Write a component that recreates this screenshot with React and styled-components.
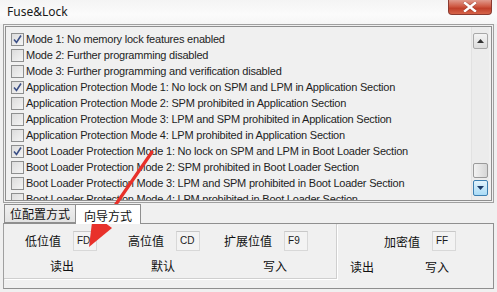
import React from "react";
import styled, { createGlobalStyle } from "styled-components";

const GlobalStyle = createGlobalStyle`
  html, body {
    margin: 0;
    padding: 0;
    background: #f0f0f0;
  }
`;

const fuseRows = [
  { text: "Mode 1: No memory lock features enabled", checked: true },
  { text: "Mode 2: Further programming disabled", checked: false },
  { text: "Mode 3: Further programming and verification disabled", checked: false },
  { text: "Application Protection Mode 1: No lock on SPM and LPM in Application Section", checked: true },
  { text: "Application Protection Mode 2: SPM prohibited in Application Section", checked: false },
  { text: "Application Protection Mode 3: LPM and SPM prohibited in Application Section", checked: false },
  { text: "Application Protection Mode 4: LPM prohibited in Application Section", checked: false },
  { text: "Boot Loader Protection Mode 1: No lock on SPM and LPM in Boot Loader Section", checked: true },
  { text: "Boot Loader Protection Mode 2: SPM prohibited in Boot Loader Section", checked: false },
  { text: "Boot Loader Protection Mode 3: LPM and SPM prohibited in Boot Loader Section", checked: false },
  { text: "Boot Loader Protection Mode 4: LPM prohibited in Boot Loader Section", checked: false },
];

const App = () => {
  return (
    <Window>
      <GlobalStyle />
      <TitleBar>
        <Title>Fuse&amp;Lock</Title>
        <CloseButton>
          <svg width="14" height="10" viewBox="0 0 14 10">
            <path d="M2 1 L12 9 M12 1 L2 9" stroke="#6d2a22" strokeWidth="3.6" strokeLinecap="square" opacity="0.35" />
            <path d="M2 1 L12 9 M12 1 L2 9" stroke="#fff" strokeWidth="2.4" strokeLinecap="square" />
          </svg>
        </CloseButton>
      </TitleBar>

      <ListFrame>
        <ListInner>
          <ListRows>
            {fuseRows.map((row) => (
              <Row key={row.text}>
                <CheckBox checked={row.checked}>
                  {row.checked && (
                    <svg width="9" height="9" viewBox="0 0 9 9">
                      <path d="M1 4.5 L3.5 7.5 L8 0.5" fill="none" stroke="#3b4f86" strokeWidth="1.6" />
                    </svg>
                  )}
                </CheckBox>
                <RowText>{row.text}</RowText>
              </Row>
            ))}
          </ListRows>
          <ScrollBar>
            <ScrollButton>
              <svg width="7" height="4" viewBox="0 0 7 4">
                <path d="M0 4 L3.5 0 L7 4 Z" fill="#333" />
              </svg>
            </ScrollButton>
            <ScrollTrack>
              <Thumb />
            </ScrollTrack>
            <ScrollButton hover>
              <svg width="7" height="4" viewBox="0 0 7 4">
                <path d="M0 0 L7 0 L3.5 4 Z" fill="#1d3d6a" />
              </svg>
            </ScrollButton>
          </ScrollBar>
        </ListInner>
      </ListFrame>

      <TabStrip>
        <Tab>位配置方式</Tab>
        <Tab active>向导方式</Tab>
      </TabStrip>

      <Panel>
        <Section main>
          <FieldRow pad={21}>
            <Field>
              <Label>低位值</Label>
              <ValueBox>FD</ValueBox>
            </Field>
            <Field offset={31}>
              <Label>高位值</Label>
              <ValueBox>CD</ValueBox>
            </Field>
            <Field offset={24}>
              <Label>扩展位值</Label>
              <ValueBox>F9</ValueBox>
            </Field>
          </FieldRow>
          <ButtonRow pad={46}>
            <ActionButton>读出</ActionButton>
            <ActionButton offset={77}>默认</ActionButton>
            <ActionButton offset={88}>写入</ActionButton>
          </ButtonRow>
        </Section>
        <Section>
          <FieldRow pad={47}>
            <Field>
              <Label>加密值</Label>
              <ValueBox>FF</ValueBox>
            </Field>
          </FieldRow>
          <ButtonRow pad={13}>
            <ActionButton>读出</ActionButton>
            <ActionButton offset={51}>写入</ActionButton>
          </ButtonRow>
        </Section>
      </Panel>

      <Annotation width="497" height="292" viewBox="0 0 497 292">
        <line x1="152" y1="152" x2="103" y2="223" stroke="#e8312a" strokeWidth="3.2" strokeLinecap="round" />
        <polygon points="89,247 93,214 112,228" fill="#e8312a" />
      </Annotation>
    </Window>
  );
};
export default App;

const Window = styled.div`
  position: relative;
  width: 497px;
  height: 292px;
  overflow: hidden;
  background: #f0f0f0;
  font-family: "Liberation Sans", Arial, sans-serif;
`;

const TitleBar = styled.div`
  height: 24px;
  display: flex;
  justify-content: space-between;
  align-items: flex-start;
  background: linear-gradient(to bottom, #f4f4f4, #fbfbfb 60%, #f6f6f6);
`;

const Title = styled.div`
  padding: 4px 0 0 7px;
  font-family: "Noto Sans", "Liberation Sans", sans-serif;
  font-size: 12px;
  line-height: 16px;
  color: #1a1a1a;
`;

const CloseButton = styled.div`
  width: 44px;
  height: 15px;
  margin-right: 5px;
  display: flex;
  align-items: center;
  justify-content: center;
  border: 1px solid #8a3a30;
  border-top: none;
  border-radius: 0 0 4px 4px;
  background: linear-gradient(to bottom, #e09a8c 0%, #cf5a44 45%, #c0402a 60%, #d6644a 100%);
  box-sizing: border-box;
`;

const ListFrame = styled.div`
  margin: 0 3px;
  height: 179px;
  border: 1px solid #a0a0a0;
  padding: 1px;
  box-sizing: border-box;
`;

const ListInner = styled.div`
  height: 100%;
  border: 1px solid #8f8f8f;
  box-sizing: border-box;
  display: flex;
  background: #f0f0f0;
  overflow: hidden;
`;

const ListRows = styled.div`
  flex: 1;
  padding: 4px 0 0 5px;
  overflow: hidden;
`;

const Row = styled.div`
  height: 16px;
  display: flex;
  align-items: center;
  white-space: nowrap;
`;

const CheckBox = styled.div`
  width: 11px;
  height: 11px;
  flex: none;
  border: 1px solid #8e8f8f;
  background: linear-gradient(135deg, #dcdcdc, #f4f4f4);
  display: flex;
  align-items: center;
  justify-content: center;
  margin-right: 2px;
`;

const RowText = styled.span`
  font-size: 11px;
  color: #1e1e1e;
  letter-spacing: -0.22px;
`;

const ScrollBar = styled.div`
  width: 17px;
  flex: none;
  display: flex;
  flex-direction: column;
  border-left: 1px solid #e2e2e2;
  background: #ececec;
  padding: 6px 0 4px 0;
  margin-right: 2px;
`;

const ScrollButton = styled.div`
  height: 14px;
  margin: 0 1px;
  display: flex;
  align-items: center;
  justify-content: center;
  border: 1px solid ${(p) => (p.hover ? "#3c7fb1" : "#a8a8a8")};
  border-radius: 2px;
  background: ${(p) =>
    p.hover
      ? "linear-gradient(to bottom, #e3f4fc, #a9dbf6)"
      : "linear-gradient(to bottom, #f4f4f4, #dcdcdc)"};
`;

const ScrollTrack = styled.div`
  flex: 1;
  display: flex;
  flex-direction: column;
  justify-content: flex-end;
  padding-bottom: 2px;
`;

const Thumb = styled.div`
  height: 13px;
  margin: 0 1px;
  border: 1px solid #9a9a9a;
  border-radius: 2px;
  background: linear-gradient(to right, #f2f2f2, #d6d6d6);
`;

const TabStrip = styled.div`
  display: flex;
  align-items: flex-end;
  height: 20px;
  padding-left: 4px;
`;

const Tab = styled.div`
  height: ${(p) => (p.active ? "20px" : "19px")};
  padding: 0 ${(p) => (p.active ? "8px" : "5px")};
  box-sizing: border-box;
  border: 1px solid #8f8f8f;
  border-bottom: ${(p) => (p.active ? "none" : "1px solid #8f8f8f")};
  border-left: ${(p) => (p.active ? "none" : "1px solid #8f8f8f")};
  background: ${(p) => (p.active ? "#ffffff" : "linear-gradient(to bottom, #f0f0f0, #e2e2e2)")};
  font-family: "Noto Sans CJK SC", sans-serif;
  font-size: 12px;
  line-height: ${(p) => (p.active ? "22px" : "18px")};
  color: #111;
  margin-bottom: ${(p) => (p.active ? "-1px" : "0")};
  position: relative;
  z-index: ${(p) => (p.active ? 1 : 0)};
`;

const Panel = styled.div`
  margin: 0 3px;
  height: 66px;
  border: 1px solid #8f8f8f;
  border-left: 1px solid #a0a0a0;
  background: #f0f0f0;
  display: flex;
  box-sizing: border-box;
`;

const Section = styled.div`
  flex: ${(p) => (p.main ? "none" : "1")};
  width: ${(p) => (p.main ? "332px" : "auto")};
  display: flex;
  flex-direction: column;
  border-right: ${(p) => (p.main ? "1px solid #cfcfcf" : "none")};
  border-bottom: ${(p) => (p.main ? "1px solid #cfcfcf" : "none")};
  box-shadow: ${(p) => (p.main ? "1px 1px 0 #ffffff" : "none")};
  margin-bottom: 9px;
`;

const FieldRow = styled.div`
  height: 34px;
  display: flex;
  align-items: center;
  padding-left: ${(p) => p.pad}px;
`;

const Field = styled.div`
  display: flex;
  align-items: center;
  gap: 12px;
  margin-left: ${(p) => p.offset || 0}px;
`;

const Label = styled.span`
  font-family: "Noto Sans CJK SC", sans-serif;
  font-size: 12px;
  color: #111;
`;

const ValueBox = styled.div`
  width: 24px;
  height: 20px;
  box-sizing: border-box;
  border: 1px solid #d8d8d8;
  border-top-color: #c8c8c8;
  background: #f3f3f3;
  font-size: 10px;
  line-height: 18px;
  padding-left: 3px;
  color: #1b1b1b;
`;

const ButtonRow = styled.div`
  flex: 1;
  display: flex;
  align-items: center;
  padding-left: ${(p) => p.pad}px;
  padding-bottom: 4px;
`;

const ActionButton = styled.div`
  font-family: "Noto Sans CJK SC", sans-serif;
  font-size: 12px;
  color: #111;
  margin-left: ${(p) => p.offset || 0}px;
`;

const Annotation = styled.svg`
  position: absolute;
  left: 0;
  top: 0;
  pointer-events: none;
`;
